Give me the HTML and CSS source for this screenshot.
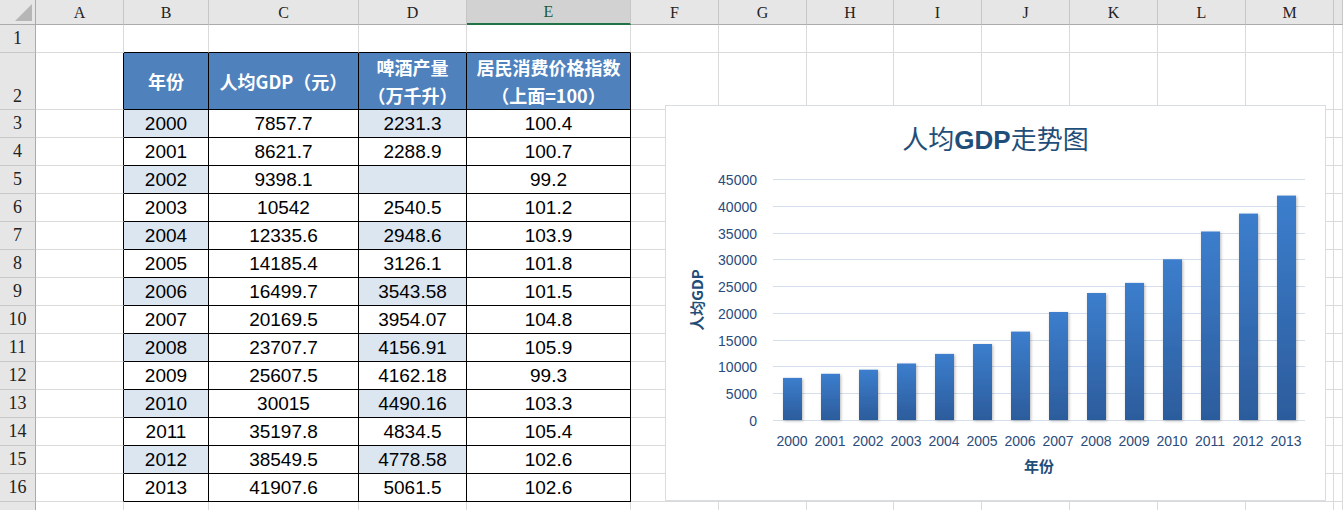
FILE: index.html
```html
<!DOCTYPE html>
<html lang="zh-CN">
<head>
<meta charset="utf-8">
<title>人均GDP走势图</title>
<link rel="stylesheet" href="styles.css">
</head>
<body>
<div class="sheet">
  <!-- column header row -->
  <div class="corner"><span class="tri"></span></div>
  <div class="ch">A</div><div class="ch">B</div><div class="ch">C</div><div class="ch">D</div><div class="ch sel">E</div><div class="ch">F</div><div class="ch">G</div><div class="ch">H</div><div class="ch">I</div><div class="ch">J</div><div class="ch">K</div><div class="ch">L</div><div class="ch">M</div><div class="ch"></div>
  <!-- row 1 -->
  <div class="rh">1</div>
  <div class="c"></div><div class="c tb"></div><div class="c tb"></div><div class="c tb"></div><div class="c tb"></div><div class="c"></div><div class="c"></div><div class="c"></div><div class="c"></div><div class="c"></div><div class="c"></div><div class="c"></div><div class="c"></div><div class="c"></div>
  <!-- row 2 -->
  <div class="rh bottom">2</div>
  <div class="c le"></div>
  <div class="d h">年份</div>
  <div class="d h">人均GDP（元）</div>
  <div class="d h">啤酒产量<br>（万千升）</div>
  <div class="d h">居民消费价格指数<br>（上面=100）</div>
  <div class="c"></div><div class="c"></div><div class="c"></div><div class="c"></div><div class="c"></div><div class="c"></div><div class="c"></div><div class="c"></div><div class="c"></div>
  <!-- row 3 -->
  <div class="rh">3</div><div class="c le"></div>
  <div class="d alt">2000</div><div class="d">7857.7</div><div class="d alt">2231.3</div><div class="d">100.4</div>
  <div class="c"></div><div class="c"></div><div class="c"></div><div class="c"></div><div class="c"></div><div class="c"></div><div class="c"></div><div class="c"></div><div class="c"></div>
  <!-- row 4 -->
  <div class="rh">4</div><div class="c le"></div>
  <div class="d">2001</div><div class="d">8621.7</div><div class="d">2288.9</div><div class="d">100.7</div>
  <div class="c"></div><div class="c"></div><div class="c"></div><div class="c"></div><div class="c"></div><div class="c"></div><div class="c"></div><div class="c"></div><div class="c"></div>
  <!-- row 5 -->
  <div class="rh">5</div><div class="c le"></div>
  <div class="d alt">2002</div><div class="d">9398.1</div><div class="d alt"></div><div class="d">99.2</div>
  <div class="c"></div><div class="c"></div><div class="c"></div><div class="c"></div><div class="c"></div><div class="c"></div><div class="c"></div><div class="c"></div><div class="c"></div>
  <!-- row 6 -->
  <div class="rh">6</div><div class="c le"></div>
  <div class="d">2003</div><div class="d">10542</div><div class="d">2540.5</div><div class="d">101.2</div>
  <div class="c"></div><div class="c"></div><div class="c"></div><div class="c"></div><div class="c"></div><div class="c"></div><div class="c"></div><div class="c"></div><div class="c"></div>
  <!-- row 7 -->
  <div class="rh">7</div><div class="c le"></div>
  <div class="d alt">2004</div><div class="d">12335.6</div><div class="d alt">2948.6</div><div class="d">103.9</div>
  <div class="c"></div><div class="c"></div><div class="c"></div><div class="c"></div><div class="c"></div><div class="c"></div><div class="c"></div><div class="c"></div><div class="c"></div>
  <!-- row 8 -->
  <div class="rh">8</div><div class="c le"></div>
  <div class="d">2005</div><div class="d">14185.4</div><div class="d">3126.1</div><div class="d">101.8</div>
  <div class="c"></div><div class="c"></div><div class="c"></div><div class="c"></div><div class="c"></div><div class="c"></div><div class="c"></div><div class="c"></div><div class="c"></div>
  <!-- row 9 -->
  <div class="rh">9</div><div class="c le"></div>
  <div class="d alt">2006</div><div class="d">16499.7</div><div class="d alt">3543.58</div><div class="d">101.5</div>
  <div class="c"></div><div class="c"></div><div class="c"></div><div class="c"></div><div class="c"></div><div class="c"></div><div class="c"></div><div class="c"></div><div class="c"></div>
  <!-- row 10 -->
  <div class="rh">10</div><div class="c le"></div>
  <div class="d">2007</div><div class="d">20169.5</div><div class="d">3954.07</div><div class="d">104.8</div>
  <div class="c"></div><div class="c"></div><div class="c"></div><div class="c"></div><div class="c"></div><div class="c"></div><div class="c"></div><div class="c"></div><div class="c"></div>
  <!-- row 11 -->
  <div class="rh">11</div><div class="c le"></div>
  <div class="d alt">2008</div><div class="d">23707.7</div><div class="d alt">4156.91</div><div class="d">105.9</div>
  <div class="c"></div><div class="c"></div><div class="c"></div><div class="c"></div><div class="c"></div><div class="c"></div><div class="c"></div><div class="c"></div><div class="c"></div>
  <!-- row 12 -->
  <div class="rh">12</div><div class="c le"></div>
  <div class="d">2009</div><div class="d">25607.5</div><div class="d">4162.18</div><div class="d">99.3</div>
  <div class="c"></div><div class="c"></div><div class="c"></div><div class="c"></div><div class="c"></div><div class="c"></div><div class="c"></div><div class="c"></div><div class="c"></div>
  <!-- row 13 -->
  <div class="rh">13</div><div class="c le"></div>
  <div class="d alt">2010</div><div class="d">30015</div><div class="d alt">4490.16</div><div class="d">103.3</div>
  <div class="c"></div><div class="c"></div><div class="c"></div><div class="c"></div><div class="c"></div><div class="c"></div><div class="c"></div><div class="c"></div><div class="c"></div>
  <!-- row 14 -->
  <div class="rh">14</div><div class="c le"></div>
  <div class="d">2011</div><div class="d">35197.8</div><div class="d">4834.5</div><div class="d">105.4</div>
  <div class="c"></div><div class="c"></div><div class="c"></div><div class="c"></div><div class="c"></div><div class="c"></div><div class="c"></div><div class="c"></div><div class="c"></div>
  <!-- row 15 -->
  <div class="rh">15</div><div class="c le"></div>
  <div class="d alt">2012</div><div class="d">38549.5</div><div class="d alt">4778.58</div><div class="d">102.6</div>
  <div class="c"></div><div class="c"></div><div class="c"></div><div class="c"></div><div class="c"></div><div class="c"></div><div class="c"></div><div class="c"></div><div class="c"></div>
  <!-- row 16 -->
  <div class="rh">16</div><div class="c le"></div>
  <div class="d">2013</div><div class="d">41907.6</div><div class="d">5061.5</div><div class="d">102.6</div>
  <div class="c"></div><div class="c"></div><div class="c"></div><div class="c"></div><div class="c"></div><div class="c"></div><div class="c"></div><div class="c"></div><div class="c"></div>
  <!-- row 17 (only its top edge is visible) -->
  <div class="rh"></div>
  <div class="c"></div><div class="c"></div><div class="c"></div><div class="c"></div><div class="c"></div><div class="c"></div><div class="c"></div><div class="c"></div><div class="c"></div><div class="c"></div><div class="c"></div><div class="c"></div><div class="c"></div><div class="c"></div>

  <!-- floating chart object -->
  <div class="chart">
    <svg class="chart-svg" width="659" height="394" viewBox="0 0 659 394">
      <defs>
        <linearGradient id="barGrad" x1="0" y1="0" x2="0" y2="1">
          <stop offset="0" stop-color="#3c7ecd"/>
          <stop offset="1" stop-color="#2c5c9c"/>
        </linearGradient>
        <filter id="barShadow" x="-50%" y="-20%" width="200%" height="140%">
          <feDropShadow dx="1" dy="1" stdDeviation="1.6" flood-color="#000" flood-opacity="0.28"/>
        </filter>
      </defs>
      <text class="title" x="329.5" y="43" text-anchor="middle">人均<tspan class="b">GDP</tspan>走势图</text>
      <g class="grid">
        <line x1="107" x2="639" y1="73.5" y2="73.5"/>
        <line x1="107" x2="639" y1="100.5" y2="100.5"/>
        <line x1="107" x2="639" y1="127.5" y2="127.5"/>
        <line x1="107" x2="639" y1="153.5" y2="153.5"/>
        <line x1="107" x2="639" y1="180.5" y2="180.5"/>
        <line x1="107" x2="639" y1="207.5" y2="207.5"/>
        <line x1="107" x2="639" y1="234.5" y2="234.5"/>
        <line x1="107" x2="639" y1="260.5" y2="260.5"/>
        <line x1="107" x2="639" y1="287.5" y2="287.5"/>
        <line x1="107" x2="639" y1="314.5" y2="314.5"/>
      </g>
      <g class="ylab" text-anchor="end">
        <text x="91" y="79">45000</text>
        <text x="91" y="106">40000</text>
        <text x="91" y="133">35000</text>
        <text x="91" y="159">30000</text>
        <text x="91" y="186">25000</text>
        <text x="91" y="213">20000</text>
        <text x="91" y="240">15000</text>
        <text x="91" y="266">10000</text>
        <text x="91" y="293">5000</text>
        <text x="91" y="320">0</text>
      </g>
      <g class="bars" fill="url(#barGrad)" filter="url(#barShadow)">
        <rect x="117" y="271.9" width="19" height="42.1"/>
        <rect x="155" y="267.8" width="19" height="46.2"/>
        <rect x="193" y="263.7" width="19" height="50.3"/>
        <rect x="231" y="257.5" width="19" height="56.5"/>
        <rect x="269" y="247.9" width="19" height="66.1"/>
        <rect x="307" y="238.0" width="19" height="76.0"/>
        <rect x="345" y="225.6" width="19" height="88.4"/>
        <rect x="383" y="206.0" width="19" height="108.0"/>
        <rect x="421" y="187.0" width="19" height="127.0"/>
        <rect x="459" y="176.9" width="19" height="137.1"/>
        <rect x="497" y="153.3" width="19" height="160.7"/>
        <rect x="535" y="125.5" width="19" height="188.5"/>
        <rect x="573" y="107.6" width="19" height="206.4"/>
        <rect x="611" y="89.6" width="19" height="224.4"/>
      </g>
      <g class="xlab" text-anchor="middle">
        <text x="126" y="340">2000</text>
        <text x="164" y="340">2001</text>
        <text x="202" y="340">2002</text>
        <text x="240" y="340">2003</text>
        <text x="278" y="340">2004</text>
        <text x="316" y="340">2005</text>
        <text x="354" y="340">2006</text>
        <text x="392" y="340">2007</text>
        <text x="430" y="340">2008</text>
        <text x="468" y="340">2009</text>
        <text x="506" y="340">2010</text>
        <text x="544" y="340">2011</text>
        <text x="582" y="340">2012</text>
        <text x="620" y="340">2013</text>
      </g>
      <text class="axis-title" x="373" y="366" text-anchor="middle">年份</text>
      <text class="axis-title" transform="translate(32 194) rotate(-90)" x="0" y="5" text-anchor="middle">人均GDP</text>
    </svg>
  </div>
</div>
</body>
</html>
```

FILE: styles.css
```css
* { box-sizing: border-box; }

html, body {
  margin: 0;
  padding: 0;
  background: #ffffff;
  overflow: hidden;
}

body {
  width: 1343px;
  height: 510px;
  font-family: "Liberation Sans", Arial, sans-serif;
}

.sheet {
  position: relative;
  display: grid;
  grid-template-columns: 36px 88px 85px 150px 108px 164px 88px 88px 87px 88px 88px 88px 88px 88px 9px;
  grid-template-rows: 25px 28px 57px repeat(14, 28px) 28px;
  width: 1343px;
}

/* column headers */
.corner {
  background: #e6e6e6;
  border-right: 1px solid #ababab;
  border-bottom: 1px solid #ababab;
  display: flex;
  align-items: flex-end;
  justify-content: flex-end;
  padding: 0 3px 3px 0;
}
.tri {
  width: 0;
  height: 0;
  border-left: 17px solid transparent;
  border-bottom: 17px solid #b6b6b6;
}

.ch {
  background: #e6e6e6;
  border-right: 1px solid #c6c6c6;
  border-bottom: 1px solid #ababab;
  display: flex;
  align-items: center;
  justify-content: center;
  font-family: "Liberation Serif", "Times New Roman", serif;
  font-size: 16px;
  color: #222222;
  padding-top: 1px;
}
.ch.sel {
  background: #d2d2d2;
  border-bottom: 2px solid #217346;
  color: #1e5a36;
}

/* row headers */
.rh {
  background: #e6e6e6;
  border-right: 1px solid #ababab;
  border-bottom: 1px solid #c8c8c8;
  display: flex;
  align-items: center;
  justify-content: center;
  font-family: "Liberation Serif", "Times New Roman", serif;
  font-size: 18px;
  color: #222222;
}
.rh.bottom {
  align-items: flex-end;
  padding-bottom: 2px;
}

/* plain grid cells */
.c {
  border-right: 1px solid #dadada;
  border-bottom: 1px solid #dadada;
}
.c.le { border-right-color: #000000; }
.c.tb { border-bottom-color: #000000; }

/* data table cells */
.d {
  border-right: 1px solid #000000;
  border-bottom: 1px solid #000000;
  display: flex;
  align-items: center;
  justify-content: center;
  font-family: "Liberation Sans", Arial, sans-serif;
  font-size: 19px;
  color: #000000;
  padding-top: 1px;
}
.d.alt { background: #dce6f1; }
.d.h {
  background: #4f81bd;
  color: #ffffff;
  font-family: "Noto Sans CJK SC", sans-serif;
  font-weight: bold;
  font-size: 18px;
  line-height: 28px;
  text-align: center;
  padding-top: 0;
}

/* chart */
.chart {
  position: absolute;
  left: 665px;
  top: 105px;
  width: 661px;
  height: 396px;
  border: 1px solid #d9dde3;
  background: #ffffff;
}
.chart-svg { display: block; }

.title {
  font-family: "Noto Sans CJK SC", sans-serif;
  font-size: 26px;
  fill: #1f4e79;
}
.title .b {
  font-family: "Liberation Sans", Arial, sans-serif;
  font-weight: bold;
}
.grid line {
  stroke: #d5deec;
  stroke-width: 1;
}
.ylab text, .xlab text {
  font-family: "Liberation Sans", Arial, sans-serif;
  font-size: 14px;
  fill: #2a4b7c;
}
.axis-title {
  font-family: "Noto Sans CJK SC", sans-serif;
  font-weight: bold;
  font-size: 15px;
  fill: #1f4e79;
}
```
